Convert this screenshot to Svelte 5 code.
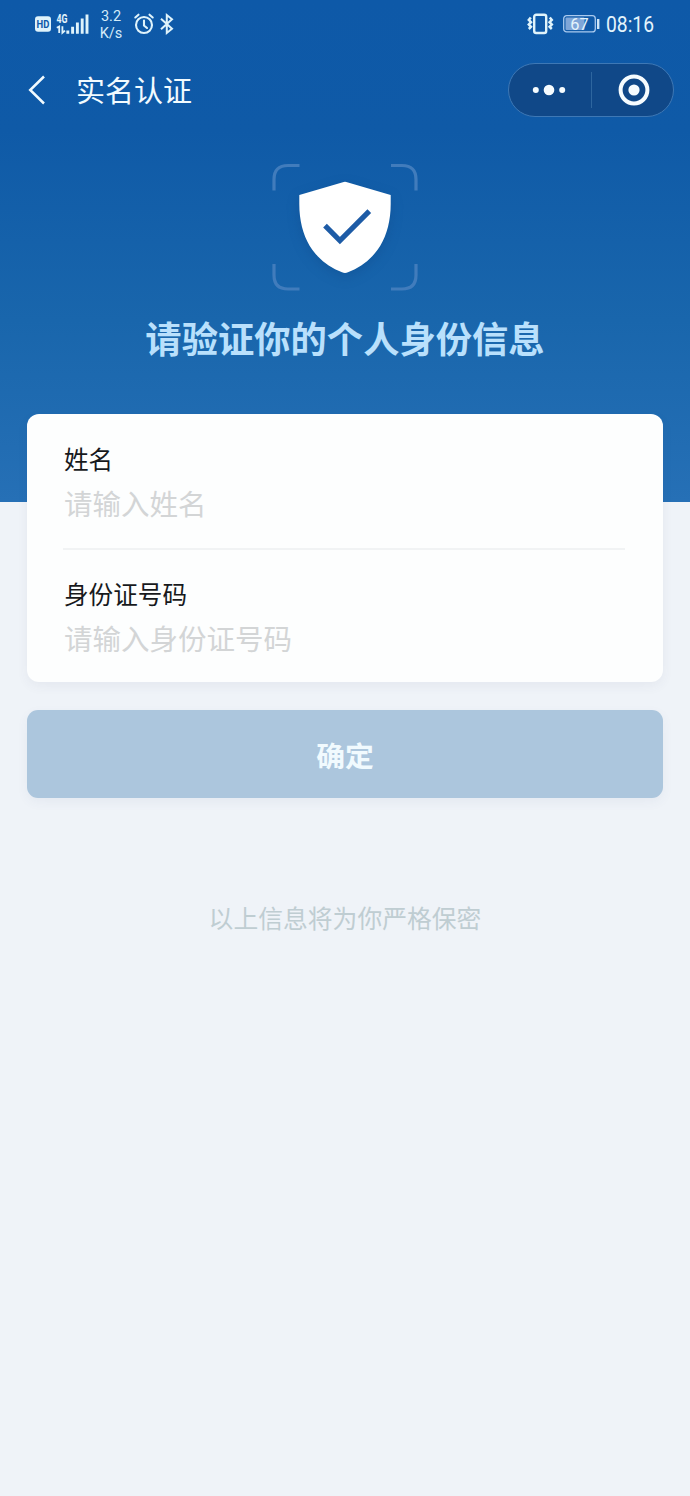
<script>
  let name = "";
  let idNumber = "";

  $: ready = name.trim() !== "" && idNumber.trim() !== "";

  function submit() {
    if (!ready) return;
    console.log("submit", name, idNumber);
  }
</script>

<div class="page">
  <header>
    <div class="status">
      <svg class="hd" width="16" height="16" viewBox="0 0 16 16">
        <rect width="16" height="15.5" y="0.3" rx="3" fill="#dff3fb" />
        <text x="1.6" y="12" textLength="12.8" lengthAdjust="spacingAndGlyphs">HD</text>
      </svg>
      <svg class="signal" width="33" height="22" viewBox="0 0 33 22">
        <text x="0.4" y="10.2" textLength="11" lengthAdjust="spacingAndGlyphs">4G</text>
        <path d="M0.8 14.8l2.4-1.3V20M6.4 13.2V19.8l2.6-2.2" fill="none" stroke="#dff3fb" stroke-width="1.8" />
        <path d="M11.8 20.8v-3.4M16.6 20.8v-7M21.4 20.8V9.6M26.2 20.8V5.6M31 20.8V1.5" stroke="#dff3fb" stroke-width="2.9" />
      </svg>
      <div class="speed"><span>3.2</span><span>K/s</span></div>
      <svg class="alarm" width="20" height="22" viewBox="0 0 20 22" fill="none" stroke="#dff3fb" stroke-width="2.1" stroke-linecap="round">
        <circle cx="10" cy="12" r="8" />
        <path d="M10 7.5v5l3 2.5M1.3 4.5L4.5 1.7M18.7 4.5L15.5 1.7" />
      </svg>
      <svg class="bluetooth" width="14" height="22" viewBox="0 0 14 22" fill="none" stroke="#dff3fb" stroke-width="2">
        <path d="M1 5.8l11 10L6.8 20V2L12 6.2l-11 10" />
      </svg>

      <svg class="vibrate" width="27" height="22" viewBox="0 0 27 22" fill="none" stroke="#dff3fb">
        <rect x="7.2" y="1.8" width="12" height="18.2" rx="2" stroke-width="2.4" />
        <path d="M3.8 4.5L1.8 7l2.2 2.2-2.2 2.3 2.2 2.3-2.2 2.2M22.8 4.5L24.8 7l-2.2 2.2 2.2 2.3-2.2 2.3 2.2 2.2" stroke-width="2.5" />
      </svg>
      <svg class="battery" width="37" height="18" viewBox="0 0 37 18">
        <rect x="0.7" y="0.7" width="31.6" height="16.2" rx="3" fill="none" stroke="#a9c9ee" stroke-width="1.3" />
        <rect x="2.5" y="2.5" width="19" height="12.6" rx="1" fill="#7fa6d8" />
        <path d="M35.2 4v10" stroke="#cfe6f7" stroke-width="2.4" />
        <text x="7.2" y="14.8" textLength="18.4" lengthAdjust="spacingAndGlyphs">67</text>
      </svg>
      <svg class="time" width="50" height="28" viewBox="0 0 50 28">
        <text x="1" y="22" textLength="48" lengthAdjust="spacingAndGlyphs">08:16</text>
      </svg>
    </div>

    <nav>
      <svg class="back" width="20" height="32" viewBox="0 0 20 32" fill="none" stroke="#f2fbff" stroke-width="2.5">
        <path d="M18 2.5L4.2 16L18 29.5" />
      </svg>
      <h1>实名认证</h1>
      <div class="capsule">
        <svg class="more" width="34" height="12" viewBox="0 0 34 12" fill="#f6fcff">
          <circle cx="3.8" cy="6" r="3" />
          <circle cx="17" cy="6" r="5.3" />
          <circle cx="30.2" cy="6" r="3" />
        </svg>
        <i></i>
        <svg class="close" width="32" height="32" viewBox="0 0 32 32">
          <circle cx="16" cy="16" r="13.4" fill="none" stroke="#f6fcff" stroke-width="4" />
          <circle cx="16" cy="16" r="5.6" fill="#f6fcff" />
        </svg>
      </div>
    </nav>

    <svg class="shield" width="170" height="150" viewBox="0 0 170 150">
      <g fill="none" stroke="#417cbc" stroke-width="3.2">
        <path d="M14 40.5V29.5Q14 15.5 28 15.5H39.5" />
        <path d="M131 15.5H142Q156 15.5 156 29.5V40.5" />
        <path d="M14 114V125Q14 139 28 139H39.5" />
        <path d="M131 139H142Q156 139 156 125V114" />
      </g>
      <path class="body" d="M85 31.7Q86 31.7 88 32.6L130.7 45V54C130.7 88 115 112 88 122.3Q85 123.7 82 122.3C55 112 39.3 88 39.3 54V45L82 32.6Q84 31.7 85 31.7Z" fill="#fff" />
      <path d="M65 75.7L79.9 90.5L109.3 61.2" fill="none" stroke="#1d5ba6" stroke-width="5.2" />
    </svg>
    <h2>请验证你的个人身份信息</h2>
  </header>

  <main>
    <div class="card">
      <div class="field">
        <label for="name">姓名</label>
        <input id="name" type="text" placeholder="请输入姓名" bind:value={name} />
      </div>
      <div class="field">
        <label for="idNumber">身份证号码</label>
        <input id="idNumber" type="text" placeholder="请输入身份证号码" bind:value={idNumber} />
      </div>
    </div>
    <button class:ready on:click={submit}>确定</button>
    <p>以上信息将为你严格保密</p>
  </main>
</div>

<style>
  :global(body) {
    margin: 0;
    background: #eff3f8;
  }

  .page {
    min-height: 1496px;
    font-family: "Noto Sans CJK SC", sans-serif;
    background: #eff3f8;
  }

  header {
    box-sizing: border-box;
    height: 502px;
    display: flex;
    flex-direction: column;
    align-items: center;
    background: linear-gradient(#0e59a8 0, #0f5aa7 130px, #1966ac 320px, #2670b6 100%);
  }

  .status {
    box-sizing: border-box;
    width: 100%;
    height: 48px;
    padding: 0 35px;
    display: flex;
    align-items: center;
    flex-shrink: 0;
    font-family: Roboto, sans-serif;
  }

  .status svg {
    flex-shrink: 0;
    overflow: visible;
  }

  .status text {
    fill: #e4f4fc;
    font-family: Roboto, sans-serif;
  }

  .status .hd text {
    fill: #0e59a8;
    font-size: 11.5px;
    font-weight: 700;
  }

  .signal {
    margin-left: 5px;
  }

  .status .signal text {
    font-size: 13px;
    font-weight: 700;
  }

  .speed {
    width: 24px;
    margin-left: 10px;
    display: flex;
    flex-direction: column;
    align-items: center;
    color: #d3ebf8;
    font-size: 14.5px;
    line-height: 17px;
    padding-top: 2px;
  }

  .alarm {
    margin-left: 11px;
  }

  .bluetooth {
    margin-left: 6px;
  }

  .vibrate {
    margin-left: auto;
  }

  .battery {
    margin-left: 9px;
  }

  .status .battery text {
    font-size: 16.5px;
  }

  .time {
    margin-left: 5px;
  }

  .status .time text {
    font-size: 22.5px;
  }

  nav {
    box-sizing: border-box;
    width: 100%;
    height: 84px;
    padding: 0 16px 0 26px;
    display: flex;
    align-items: center;
    flex-shrink: 0;
  }

  h1 {
    margin: -2px auto 0 30px;
    color: #f2fbff;
    font-size: 29px;
    font-weight: 400;
    line-height: 40px;
  }

  .capsule {
    box-sizing: border-box;
    width: 166px;
    height: 54px;
    display: flex;
    align-items: center;
    border: 1px solid #3e78b5;
    border-radius: 27px;
    background: #104888;
  }

  .more {
    margin-left: 23px;
  }

  .capsule i {
    width: 1px;
    height: 36px;
    margin-left: 25px;
    background: #2e669f;
  }

  .close {
    margin-left: 26px;
  }

  .shield {
    margin-top: 18px;
    flex-shrink: 0;
  }

  .body {
    filter: drop-shadow(0 4px 6px rgba(8, 60, 120, 0.25));
  }

  h2 {
    margin: 10px 0 0;
    color: #b9e0fc;
    font-size: 36.3px;
    font-weight: 700;
    line-height: 54px;
  }

  main {
    margin-top: -88px;
    padding: 0 27px;
  }

  .card {
    box-sizing: border-box;
    height: 268px;
    padding: 0 38px 0 36px;
    border-radius: 12px;
    background: #fdfefe;
    box-shadow: 0 4px 12px rgba(60, 70, 100, 0.06);
  }

  .field {
    box-sizing: border-box;
    height: 132px;
    padding: 25px 0 0 1px;
  }

  .field:first-child {
    height: 136px;
    padding-top: 26px;
    border-bottom: 2px solid #f1f3f4;
  }

  label {
    display: block;
    color: #17191c;
    font-size: 24.6px;
    line-height: 36px;
  }

  input {
    display: block;
    width: 100%;
    height: 44px;
    margin-top: 4px;
    padding: 0;
    border: 0;
    outline: none;
    background: none;
    color: #17191c;
    font-family: inherit;
    font-size: 28.5px;
  }

  input::placeholder {
    color: #d3d5d6;
    opacity: 1;
  }

  button {
    display: block;
    width: 100%;
    height: 88px;
    margin-top: 28px;
    padding: 0;
    border: 0;
    border-radius: 11px;
    background: #acc6dd;
    box-shadow: 0 4px 12px rgba(60, 90, 130, 0.06);
    color: #f1fafe;
    font-family: inherit;
    font-size: 28.8px;
    font-weight: 700;
  }

  button.ready {
    background: #2670b6;
  }

  p {
    margin: 101px 0 0;
    color: #bfcdd2;
    font-size: 24.8px;
    line-height: 36px;
    text-align: center;
  }
</style>
